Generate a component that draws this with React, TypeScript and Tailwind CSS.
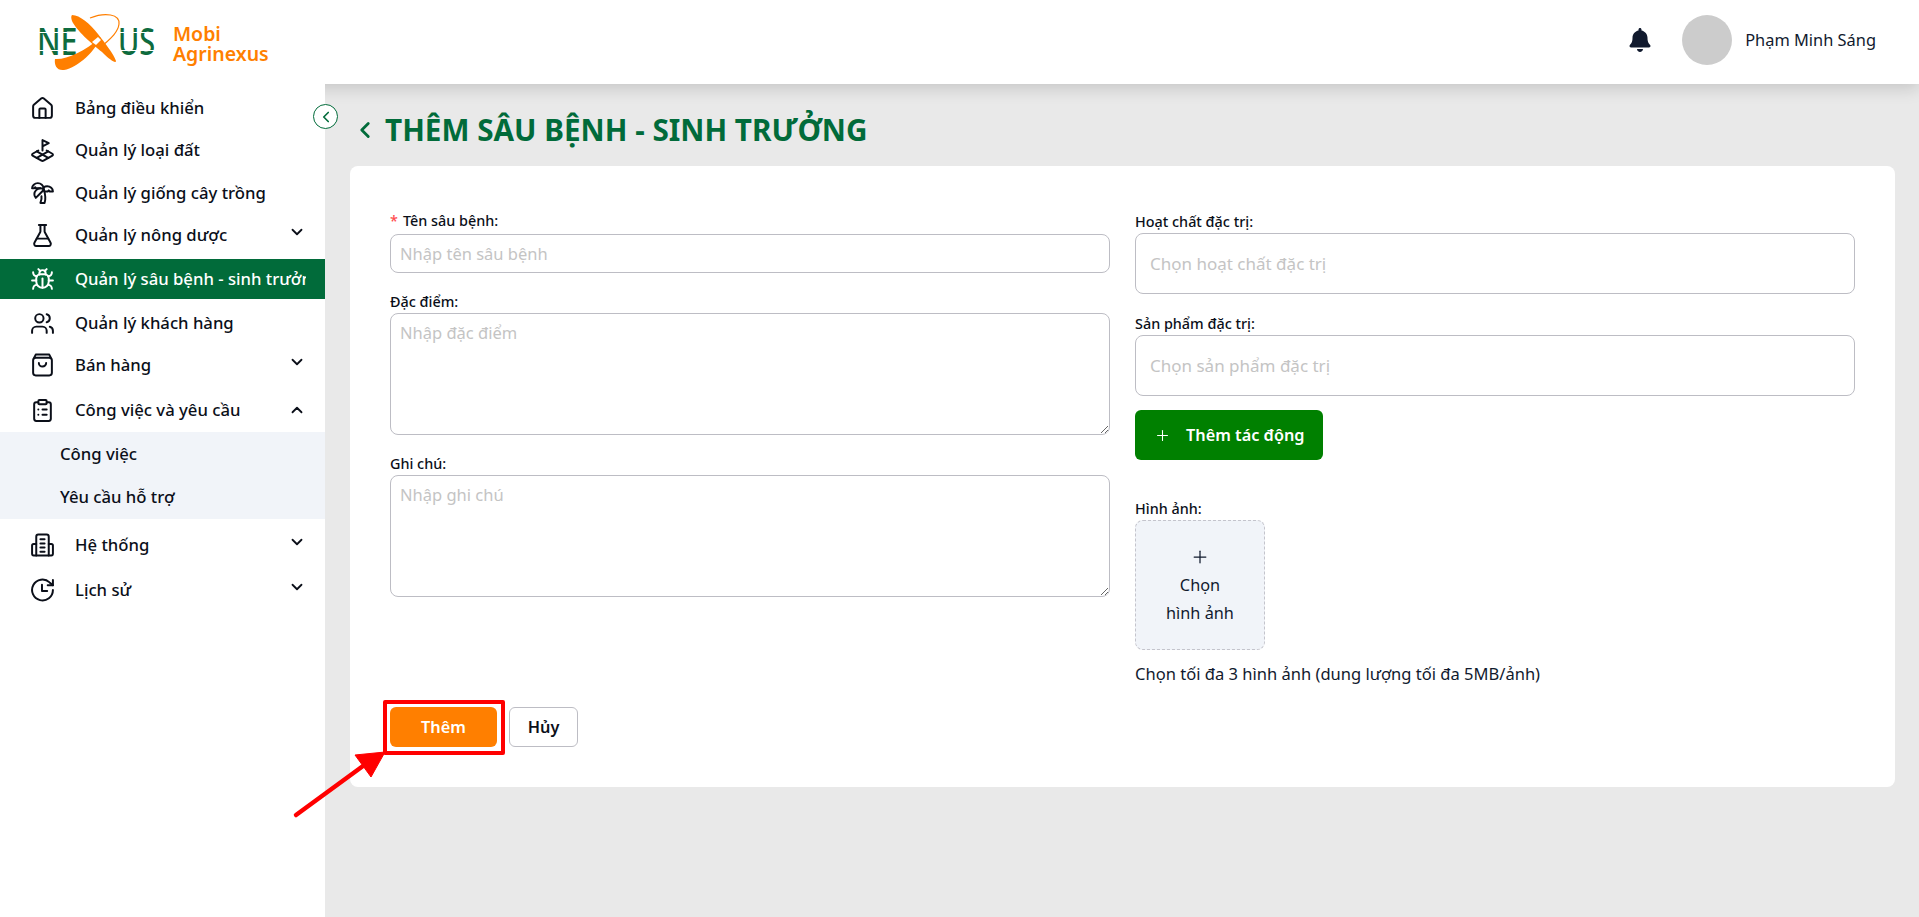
import { Bug, ChevronDown, ChevronLeft, ChevronUp, ClipboardList, FlaskConical, House, LandPlot, Plus, TreePalm, Users } from "lucide-react";
import type { ReactNode } from "react";
import { FaBell } from "react-icons/fa";

const font = "font-['Noto_Sans',sans-serif]";

function BagIcon() {
  return (
    <svg width="26" height="26" viewBox="0 0 24 24" fill="none" stroke="currentColor" strokeWidth="1.9" strokeLinecap="round" strokeLinejoin="round">
      <rect x="3" y="5" width="18" height="17" rx="2.5" />
      <path d="M4 5l1.5-3h13L20 5" />
      <path d="M8.5 10a3.5 3.5 0 0 0 7 0" />
    </svg>
  );
}

function OfficeIcon() {
  return (
    <svg width="26" height="26" viewBox="0 0 24 24" fill="none" stroke="currentColor" strokeWidth="1.9" strokeLinecap="round" strokeLinejoin="round">
      <path d="M6 22V4a2 2 0 0 1 2-2h8a2 2 0 0 1 2 2v18" />
      <path d="M6 11H3.5A1.5 1.5 0 0 0 2 12.500V20.500A1.500 1.500 0 0 0 3.500 22h17a1.500 1.500 0 0 0 1.500-1.500v-8a1.500 1.500 0 0 0-1.500-1.500H18" />
      <path d="M10 6.500h4M10 10.500h4M10 14.500h4M10 18.500h4" />
    </svg>
  );
}

function ClockIcon() {
  return (
    <svg width="26" height="26" viewBox="0 0 24 24" fill="none" stroke="currentColor" strokeWidth="1.9" strokeLinecap="round" strokeLinejoin="round">
      <path d="M22 12a10 10 0 1 1-3.200-7.300L22 7.500" />
      <path d="M22 2.500v5h-5" />
      <path d="M11.500 7v6h5" />
    </svg>
  );
}

function Logo() {
  return (
    <svg width="130" height="60" viewBox="0 0 130 60" className="shrink-0">
      <text transform="translate(7 43) scale(0.8 1)" fontFamily="'Noto Sans',sans-serif" fontSize="38" fontWeight="500" fill="#0e6b3e">NE</text>
      <text transform="translate(88 43) scale(0.76 1)" fontFamily="'Noto Sans',sans-serif" fontSize="38" fontWeight="500" fill="#0e6b3e">US</text>
      {/* segment gaps in the lettering */}
      <path d="M5 20.500H50M5 38.500H50M86 20.500H128M86 38.500H128" stroke="#ffffff" strokeWidth="1.2" />
      <path d="M60 6C75 0 90 2 89 12C88 22 76 30 70 36" fill="none" stroke="#ff7f00" strokeWidth="1.2" />
      <path d="M42 3C50 3 60 12 68 22C74 30 84 42 86 49C86 52 80 48 72 40C62 32 46 18 42 9C41 6 41 4 42 3Z" fill="#ff7f00" />
      <path d="M25 47C36 48 54 40 71 25C66 38 48 56 34 58C27 59 24 53 25 47Z" fill="#ff7f00" />
      <path d="M62 30l6-5 3 3-5 5z" fill="#ffffff" />
    </svg>
  );
}

type MenuItem = {
  label: string;
  icon: ReactNode;
  className: string;
  active?: boolean;
  chevron?: "up" | "down";
};

const menuTop: MenuItem[] = [
  { label: "Bảng điều khiển", icon: <House size={25} strokeWidth={1.9} />, className: "h-[42px]" },
  { label: "Quản lý loại đất", icon: <LandPlot size={25} strokeWidth={1.9} />, className: "h-[42px]" },
  { label: "Quản lý giống cây trồng", icon: <TreePalm size={25} strokeWidth={1.9} />, className: "h-[43px]" },
  { label: "Quản lý nông dược", icon: <FlaskConical size={25} strokeWidth={1.9} />, className: "h-[42px] mb-[3px]", chevron: "down" },
  { label: "Quản lý sâu bệnh - sinh trưởng", icon: <Bug size={25} strokeWidth={1.9} />, className: "h-[40px]", active: true },
  { label: "Quản lý khách hàng", icon: <Users size={25} strokeWidth={1.9} />, className: "h-[44px] mt-[2px]" },
  { label: "Bán hàng", icon: <BagIcon />, className: "h-[40px]", chevron: "down" },
  { label: "Công việc và yêu cầu", icon: <ClipboardList size={25} strokeWidth={1.9} />, className: "h-[44px] mt-[3px]", chevron: "up" },
];

const menuBottom: MenuItem[] = [
  { label: "Hệ thống", icon: <OfficeIcon />, className: "h-[45px] mt-[3px]", chevron: "down" },
  { label: "Lịch sử", icon: <ClockIcon />, className: "h-[45px]", chevron: "down" },
];

function MenuRow({ item }: { item: MenuItem }) {
  return (
    <div className={`flex items-center pl-[30px] ${item.className} ${item.active ? "bg-[#016b3a] text-white" : "text-[#0b0f19]"}`}>
      <span className="flex w-[25px] shrink-0 justify-center">{item.icon}</span>
      <span className="ml-[20px] w-[231px] overflow-hidden text-[16.700px] leading-6 font-medium whitespace-nowrap">{item.label}</span>
      {item.chevron === "down" && <ChevronDown size={18} strokeWidth={2.4} className="-ml-[18px] -translate-y-[3px]" />}
      {item.chevron === "up" && <ChevronUp size={18} strokeWidth={2.4} className="-ml-[18px]" />}
    </div>
  );
}

function Field({ label, children, className = "", labelClass = "" }: { label: ReactNode; children: ReactNode; className?: string; labelClass?: string }) {
  return (
    <div className={className}>
      <label className={`block h-[22px] text-[14.400px] leading-[22px] font-medium text-[#0b0f19] ${labelClass}`}>{label}</label>
      {children}
    </div>
  );
}

const inputClass = "block w-full rounded-lg border border-[#bdbdc4] bg-white text-[#111] outline-none placeholder:text-[#c4c4c4]";

export default function App() {
  return (
    <div className={`flex h-screen flex-col overflow-hidden bg-[#e9e9e9] ${font}`}>
      <header className="z-10 flex h-[84px] shrink-0 items-center bg-white pr-[43px] pl-[30px] shadow-[0_4px_16px_rgba(0,0,0,0.16)]">
        <Logo />
        <div className="ml-[13px] translate-y-[2px] text-[19.500px] leading-[20px] font-semibold text-[#ff7f00]">
          <div>Mobi</div>
          <div>Agrinexus</div>
        </div>
        <div className="ml-auto flex -translate-y-[2px] items-center">
          <FaBell size={24} className="text-[#111a2e]" />
          <div className="ml-[30px] h-[50px] w-[50px] rounded-full bg-[#cccccc]" />
          <span className="ml-[13px] text-[16.400px] text-[#111a2e]">Phạm Minh Sáng</span>
        </div>
      </header>

      <div className="flex min-h-0 flex-1">
        <aside className="relative z-20 w-[325px] shrink-0 bg-white pt-[3px]">
          <button className="absolute top-[20px] -right-[13px] flex h-[25px] w-[25px] items-center justify-center rounded-full border border-[#016b3a] bg-white text-[#016b3a]">
            <ChevronLeft size={18} strokeWidth={2.2} />
          </button>
          {menuTop.map((item) => (
            <MenuRow key={item.label} item={item} />
          ))}
          <div className="bg-[#f1f4f9] text-[16.700px] leading-6 font-medium text-[#0b0f19]">
            <div className="flex h-[43px] items-center pl-[60px]">Công việc</div>
            <div className="flex h-[44px] items-center pl-[60px]">Yêu cầu hỗ trợ</div>
          </div>
          {menuBottom.map((item) => (
            <MenuRow key={item.label} item={item} />
          ))}
        </aside>

        <main className="min-w-0 flex-1 pt-[22px] pr-[24px] pl-[25px]">
          <div className="flex h-[48px] items-center pl-[2px] text-[#016b3a]">
            <ChevronLeft size={26} strokeWidth={2.6} />
            <h1 className="ml-[7px] text-[29.700px] font-bold whitespace-nowrap">THÊM SÂU BỆNH - SINH TRƯỞNG</h1>
          </div>

          <section className="relative mt-[12px] rounded-lg bg-white px-[40px] pt-[45px] pb-[40px]">
            <div className="grid grid-cols-2 gap-x-[25px]">
              <div className="pt-px">
                <Field
                  labelClass="-translate-y-[2px]"
                  label={
                    <>
                      <span className="mr-[5px] text-[#ff4d4f]">*</span>Tên sâu bệnh:
                    </>
                  }
                >
                  <input placeholder="Nhập tên sâu bệnh" className={`${inputClass} h-[39px] px-[9px] text-[16.500px]`} />
                </Field>
                <Field label="Đặc điểm:" className="mt-[18px]">
                  <textarea placeholder="Nhập đặc điểm" className={`${inputClass} h-[122px] px-[9px] py-[7px] text-[16.500px]`} />
                </Field>
                <Field label="Ghi chú:" className="mt-[18px]">
                  <textarea placeholder="Nhập ghi chú" className={`${inputClass} h-[122px] px-[9px] py-[7px] text-[16.500px]`} />
                </Field>
              </div>

              <div>
                <Field label="Hoạt chất đặc trị:">
                  <input placeholder="Chọn hoạt chất đặc trị" className={`${inputClass} h-[61px] px-[14px] text-[17px]`} />
                </Field>
                <Field label="Sản phẩm đặc trị:" className="mt-[19px]">
                  <input placeholder="Chọn sản phẩm đặc trị" className={`${inputClass} h-[61px] px-[14px] text-[17px]`} />
                </Field>
                <button className="mt-[14px] flex h-[50px] w-[188px] items-center rounded-md bg-[#008000] pl-[19px] text-[16.300px] font-semibold text-white">
                  <Plus size={17} strokeWidth={1.5} />
                  <span className="ml-[15px]">Thêm tác động</span>
                </button>
                <Field label="Hình ảnh:" className="mt-[38px]">
                  <div className="flex h-[130px] w-[130px] flex-col items-center rounded-lg border border-dashed border-[#c4c4cc] bg-[#f1f4f9] pt-[26px] text-center text-[16.300px] leading-[28px] text-[#111a2e]">
                    <Plus size={20} strokeWidth={1.5} />
                    <div className="mt-[4px]">Chọn</div>
                    <div>hình ảnh</div>
                  </div>
                </Field>
                <p className="mt-[12px] text-[16.550px] leading-6 text-[#111a2e]">Chọn tối đa 3 hình ảnh (dung lượng tối đa 5MB/ảnh)</p>
              </div>
            </div>

            <div className="mt-[21px] flex gap-[12px]">
              <div className="relative">
                <button className="h-[40px] w-[107px] rounded-md bg-[#ff7f00] text-[16.300px] font-semibold text-white">Thêm</button>
                {/* annotation */}
                <div className="pointer-events-none absolute -top-[7px] -left-[7px] h-[55px] w-[122px] rounded-[2px] border-[4px] border-[#ff0000]" />
                <svg width="105" height="75" viewBox="0 0 105 75" className="pointer-events-none absolute top-[43px] -left-[105px] z-30">
                  <path d="M11 65L78 16" stroke="#ff0000" strokeWidth="4.500" strokeLinecap="round" />
                  <path d="M70 5L100 2L86 27Z" fill="#ff0000" stroke="#ff0000" strokeWidth="1" strokeLinejoin="round" />
                </svg>
              </div>
              <button className="h-[40px] w-[69px] rounded-md border border-[#bdbdc4] bg-white text-[16.300px] font-semibold text-[#0b0f19]">Hủy</button>
            </div>
          </section>
        </main>
      </div>
    </div>
  );
}
